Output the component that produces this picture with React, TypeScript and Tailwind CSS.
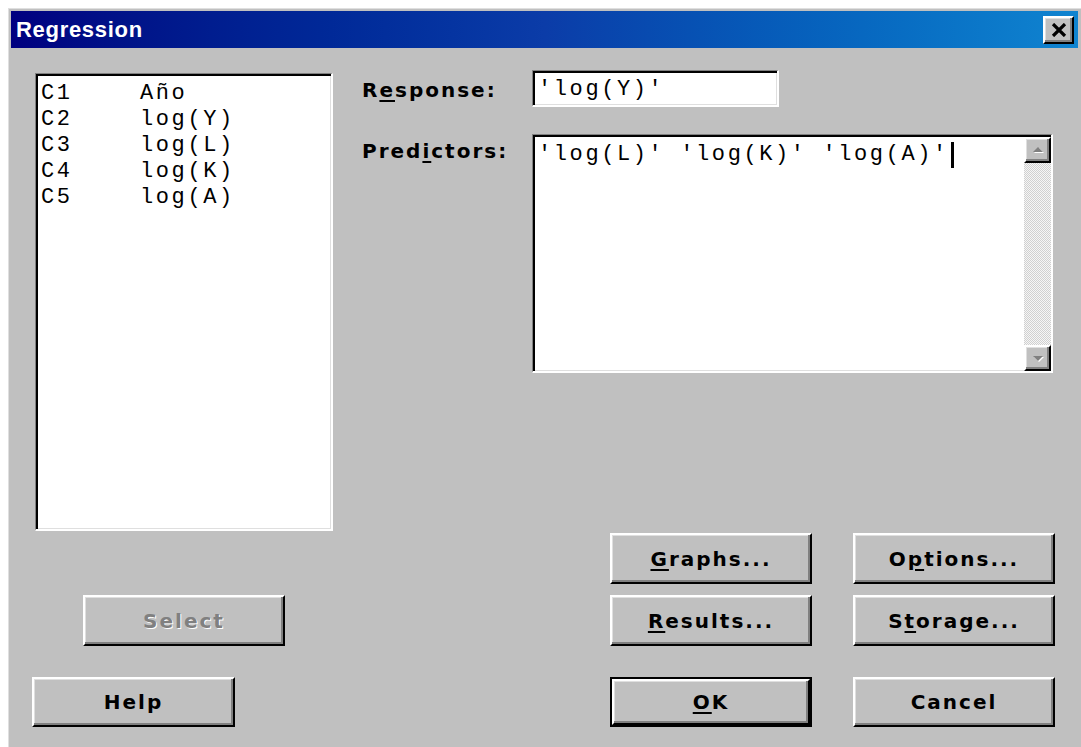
import type { ReactNode } from "react"

const sans = "font-['Liberation_Sans',Arial,sans-serif]"
const label = "font-['DejaVu_Sans',Verdana,sans-serif] text-[20px] font-bold tracking-[2px]"
const mono = "font-['Liberation_Mono','Courier_New',monospace]"

const columns = [
  { id: "C1", name: "Año" },
  { id: "C2", name: "log(Y)" },
  { id: "C3", name: "log(L)" },
  { id: "C4", name: "log(K)" },
  { id: "C5", name: "log(A)" },
]

// Win95 style raised face
function Raised({ children, className = "" }: { children?: ReactNode; className?: string }) {
  return (
    <div
      className={`flex items-center justify-center border-2 border-t-white border-l-white border-r-black border-b-black bg-[#c0c0c0] shadow-[inset_-2px_-2px_0_#808080,inset_1px_1px_0_#dfdfdf] ${className}`}
    >
      {children}
    </div>
  )
}

function DialogButton({
  children,
  className = "",
  isDefault = false,
  disabled = false,
}: {
  children: ReactNode
  className?: string
  isDefault?: boolean
  disabled?: boolean
}) {
  const text = disabled
    ? "text-[#808080] [text-shadow:1px_1px_0_#fff]"
    : "text-black"
  if (isDefault) {
    return (
      <div className={`flex border-2 border-black ${className}`}>
        <Raised className="flex-1">
          <span className={`${label} ${text}`}>{children}</span>
        </Raised>
      </div>
    )
  }
  return (
    <Raised className={className}>
      <span className={`${label} ${text}`}>{children}</span>
    </Raised>
  )
}

function Key({ children }: { children: ReactNode }) {
  return <u className="decoration-2 underline-offset-[3px]">{children}</u>
}

function ScrollArrow({ up }: { up?: boolean }) {
  return (
    <Raised className="h-[26px] w-[27px] shrink-0">
      <svg width="12" height="8" viewBox="0 0 12 8">
        {up ? (
          <>
            <polygon points="6,1 11,6 1,6" fill="#fff" transform="translate(1,1)" />
            <polygon points="6,1 11,6 1,6" fill="#808080" />
          </>
        ) : (
          <>
            <polygon points="1,2 11,2 6,7" fill="#fff" transform="translate(1,1)" />
            <polygon points="1,2 11,2 6,7" fill="#808080" />
          </>
        )}
      </svg>
    </Raised>
  )
}

const sunken =
  "border-t border-l border-t-[#808080] border-l-[#808080] border-b-2 border-r-2 border-b-white border-r-white bg-white shadow-[inset_2px_2px_0_#000,inset_-1px_-1px_0_#dfdfdf]"

export default function App() {
  return (
    <div className="flex h-[747px] w-[1081px] overflow-hidden bg-white pl-[8px] pt-[8px]">
      <div className="flex flex-1 flex-col border-l border-t border-[#dfdfdf] bg-[#c0c0c0] pl-[2px] pr-[3px] pt-[2px]">
        {/* Title bar */}
        <div className="flex h-[37px] shrink-0 items-center justify-between bg-linear-to-r from-[#000080] via-[#0b3ca8] to-[#1084d0] pl-[5px] pr-[4px]">
          <span className={`${sans} text-[22px] font-bold tracking-[0.7px] text-white`}>Regression</span>
          <Raised className="h-[28px] w-[31px]">
            <svg width="16" height="14" viewBox="0 0 16 14">
              <path d="M2 1 L14 13 M14 1 L2 13" stroke="#000" strokeWidth="3.2" />
            </svg>
          </Raised>
        </div>

        <div className="flex flex-1 pl-[21px]">
          {/* Left column: variable list */}
          <div className="flex w-[303px] flex-col">
            <div className={`ml-[3px] mt-[25px] h-[458px] w-[298px] pl-[5px] pt-[7px] ${sunken}`}>
              {columns.map((c) => (
                <div key={c.id} className={`${mono} flex h-[26px] items-center text-[22px] leading-[26px] tracking-[2.6px] text-black`}>
                  <span className="w-[99px]">{c.id}</span>
                  <span>{c.name}</span>
                </div>
              ))}
            </div>
            <DialogButton disabled className="ml-[51px] mt-[64px] h-[51px] w-[202px]">
              Select
            </DialogButton>
            <DialogButton className="mt-[31px] h-[50px] w-[203px]">Help</DialogButton>
          </div>

          {/* Right column */}
          <div className="ml-[25px] flex flex-col">
            <div className="mt-[22px] flex items-center">
              <span className={`${label} w-[172px] pl-[2px] pt-[3px] text-black`}>
                R<Key>e</Key>sponse:
              </span>
              <div className={`flex h-[37px] w-[247px] items-center pl-[5px] pt-[2px] ${sunken}`}>
                <span className={`${mono} text-[22px] tracking-[2.6px] text-black`}>'log(Y)'</span>
              </div>
            </div>

            <div className="mt-[27px] flex items-start">
              <span className={`${label} w-[172px] pl-[2px] pt-[2px] text-black`}>
                Pred<Key>i</Key>ctors:
              </span>
              <div className={`flex h-[239px] w-[521px] ${sunken}`}>
                <div className="flex flex-1 items-start pl-[5px] pt-[7px]">
                  <span className={`${mono} text-[22px] leading-[26px] tracking-[2.6px] text-black`}>
                    'log(L)' 'log(K)' 'log(A)'
                  </span>
                  <span className="ml-[2px] h-[26px] w-[3px] bg-black" />
                </div>
                <div className="mt-[2px] flex w-[27px] flex-col bg-[image:repeating-conic-gradient(#d0d0d0_0%_25%,#f6f6f6_0%_50%)] bg-[length:2px_2px]">
                  <ScrollArrow up />
                  <div className="flex-1" />
                  <ScrollArrow />
                </div>
              </div>
            </div>

            <div className="ml-[250px] mt-[160px] grid grid-cols-[202px_202px] gap-x-[41px]">
              <DialogButton className="h-[51px]">
                <Key>G</Key>raphs...
              </DialogButton>
              <DialogButton className="h-[51px]">
                O<Key>p</Key>tions...
              </DialogButton>
              <DialogButton className="mt-[11px] h-[51px]">
                <Key>R</Key>esults...
              </DialogButton>
              <DialogButton className="mt-[11px] h-[51px]">
                S<Key>t</Key>orage...
              </DialogButton>
              <DialogButton isDefault className="mt-[31px] h-[50px]">
                <Key>O</Key>K
              </DialogButton>
              <DialogButton className="mt-[31px] h-[50px]">Cancel</DialogButton>
            </div>
          </div>
        </div>
      </div>
    </div>
  )
}
